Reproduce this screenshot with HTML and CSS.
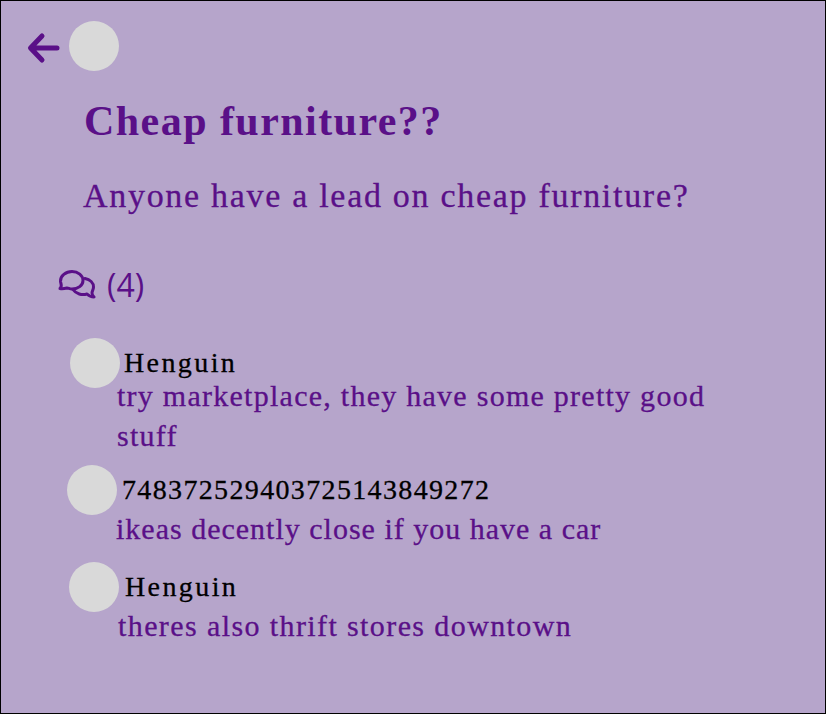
FILE: index.html
```html
<!DOCTYPE html>
<html lang="en">
<head>
    <meta charset="UTF-8">
    <meta name="viewport" content="width=device-width, initial-scale=1.0">
    <title>Cheap furniture??</title>
    <link rel="stylesheet" href="styles.css">
</head>
<body>
    <div class="screen">
        <div class="top-row">
            <svg class="back" width="34" height="34" viewBox="0 0 34 34" fill="none" stroke="#5a1088" stroke-width="5" stroke-linecap="round" stroke-linejoin="round">
                <path d="M30 17H4M15 5L3.500 17L15 29"/>
            </svg>
            <div class="avatar"></div>
        </div>
        <h1>Cheap furniture??</h1>
        <p class="post-text">Anyone have a lead on cheap furniture?</p>
        <div class="count-row">
            <svg class="bubbles" width="38" height="30" viewBox="0 0 38 30" fill="none" stroke="#5a1088" stroke-width="3" stroke-linejoin="round" stroke-linecap="round">
                <path d="M2 19.500C4.500 17.500 3 15.500 2.500 12.500C2 7 8 2.500 14 2.500C20 2.500 25 6.500 25 11.500C25 16.500 20 20 14 20C11.500 20 10.500 19 9 19C7 19.500 4 20 2 19.500Z"/>
                <path d="M27 9.500C32 10.500 35.500 14 35.500 18C35.500 20.500 34 22 34 24C34 25.500 35 27 36 28C33 28 30.500 26.500 29 25C24 26.500 18 25 15 20.500"/>
            </svg>
            <span class="count">(4)</span>
        </div>
        <div class="comment first">
            <div class="comment-head">
                <div class="avatar"></div>
                <span class="name henguin">Henguin</span>
            </div>
            <p class="comment-text">try marketplace, they have some pretty good stuff</p>
        </div>
        <div class="comment second">
            <div class="comment-head">
                <div class="avatar"></div>
                <span class="name">748372529403725143849272</span>
            </div>
            <p class="comment-text">ikeas decently close if you have a car</p>
        </div>
        <div class="comment third">
            <div class="comment-head">
                <div class="avatar"></div>
                <span class="name henguin">Henguin</span>
            </div>
            <p class="comment-text">theres also thrift stores downtown</p>
        </div>
    </div>
</body>
</html>
```

FILE: styles.css
```css
body {
    margin: 0;
    font-family: 'Liberation Serif', serif;
    color: #5a1088;
}
.screen {
    box-sizing: border-box;
    width: 826px;
    height: 714px;
    border: 1px solid #000;
    background: #b6a5cb;
    overflow: hidden;
}
.top-row {
    display: flex;
    align-items: center;
    margin: 20px 0 0 26px;
    gap: 8px;
}
.back {
    margin-top: 4px;
}
.avatar {
    width: 50px;
    height: 50px;
    border-radius: 50%;
    background: #d9d9d9;
    flex-shrink: 0;
}
h1 {
    margin: 22px 0 0 83px;
    font-size: 42px;
    line-height: 56px;
    font-weight: bold;
    letter-spacing: 1.45px;
}
.post-text {
    margin: 26px 0 0 82px;
    font-size: 34px;
    line-height: 42px;
    letter-spacing: 1.7px;
    -webkit-text-stroke: 0.3px #5a1088;
}
.count-row {
    display: flex;
    align-items: center;
    margin: 49px 0 0 57px;
    gap: 11px;
    height: 36px;
}
.count {
    font-family: 'Open Sans', sans-serif;
    font-size: 32px;
}
.comment-head {
    display: flex;
    align-items: center;
    gap: 4px;
}
.name {
    color: #000;
    font-size: 28px;
    letter-spacing: 1.35px;
    -webkit-text-stroke: 0.3px #000;
}
.henguin {
    letter-spacing: 2.4px;
}
.comment-text {
    margin: 0;
    font-size: 30px;
    line-height: 40px;
    letter-spacing: 1.26px;
    width: 610px;
    -webkit-text-stroke: 0.3px #5a1088;
}
.first {
    margin: 36px 0 0 69px;
}
.first .comment-text {
    margin: -12px 0 0 47px;
}
.second {
    margin: 9px 0 0 66px;
}
.second .name {
    margin-left: 1px;
}
.second .comment-text {
    margin: -6px 0 0 49px;
    letter-spacing: 1px;
}
.third {
    margin: 13px 0 0 68px;
}
.third .name {
    margin-left: 2px;
}
.third .comment-text {
    margin: -6px 0 0 49px;
    letter-spacing: 1.4px;
}
```
